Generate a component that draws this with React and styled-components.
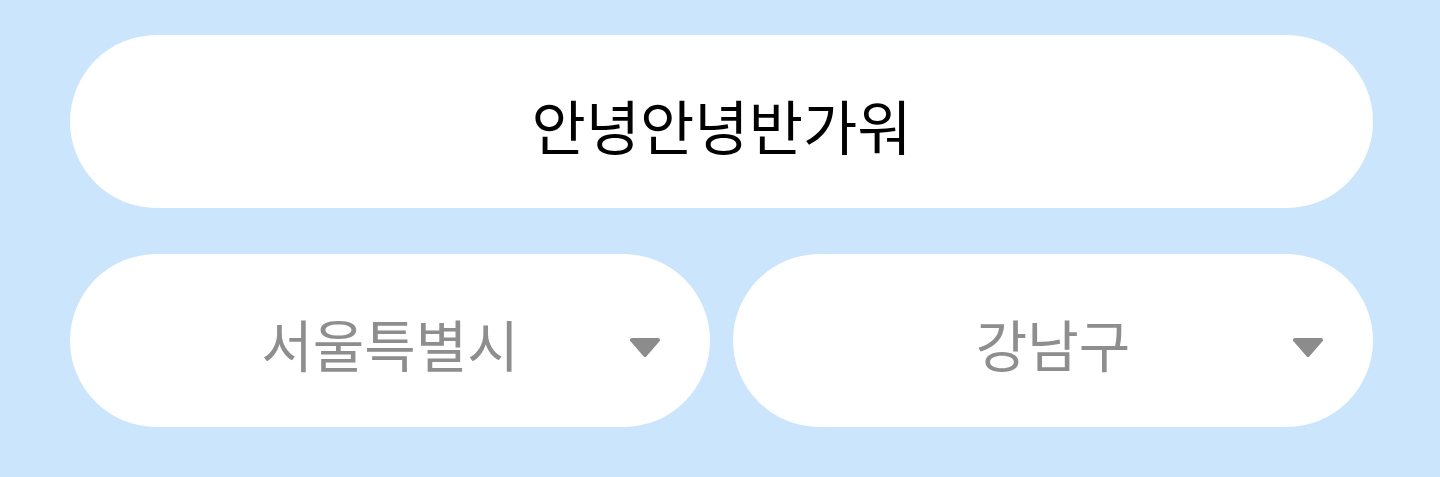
import React from 'react';
import styled, { createGlobalStyle } from 'styled-components';

const GlobalStyle = createGlobalStyle`
  html, body {
    margin: 0;
    padding: 0;
    background: #cbe5fc;
  }
  body {
    font-family: "Noto Sans CJK KR", "Noto Sans", sans-serif;
  }
`;

const Page = styled.div`
  width: 1440px;
  height: 477px;
  box-sizing: border-box;
  padding: 35px 67px 0 70px;
  display: flex;
  flex-direction: column;
  gap: 46px;
  background: #cbe5fc;
`;

const Pill = styled.div`
  height: 173px;
  border-radius: 87px;
  background: #ffffff;
  display: flex;
  align-items: center;
  justify-content: center;
  position: relative;
  box-sizing: border-box;
`;

const Label = styled.span`
  font-size: ${(p) => p.size || 54}px;
  line-height: 1;
  color: ${(p) => (p.muted ? '#8e8e8e' : '#000000')};
  letter-spacing: 0;
  transform: translateY(${(p) => p.shift || 0}px);
`;

const SelectRow = styled.div`
  display: grid;
  grid-template-columns: 640px 640px;
  column-gap: 23px;
`;

const Caret = styled.svg`
  position: absolute;
  right: 49px;
  top: 50%;
  margin-top: -4px;
  width: 32px;
  height: 21px;
  filter: blur(0.4px);
`;

function Arrow() {
  return (
    <Caret viewBox="0 0 32 21">
      <polygon
        points="3,3 29,3 16,18"
        fill="#8c8c8c"
        stroke="#8c8c8c"
        strokeWidth="4"
        strokeLinejoin="round"
      />
    </Caret>
  );
}

function Select({ value }) {
  return (
    <Pill>
      <Label muted size={56} shift={2}>{value}</Label>
      <Arrow />
    </Pill>
  );
}

export default function App() {
  return (
    <>
      <GlobalStyle />
      <Page>
        <Pill>
          <Label size={59} shift={3}>안녕안녕반가워</Label>
        </Pill>
        <SelectRow>
          <Select value="서울특별시" />
          <Select value="강남구" />
        </SelectRow>
      </Page>
    </>
  );
}
